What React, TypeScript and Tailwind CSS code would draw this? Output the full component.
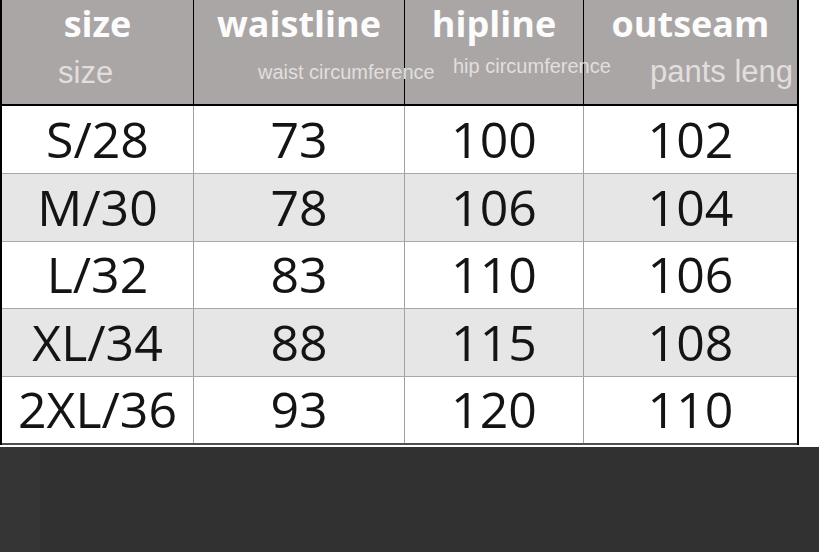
const headers = [
  { title: "size", sub: "size", subClass: "pl-[56px] pt-[13px] text-[31px] leading-[31px]" },
  { title: "waistline", sub: "waist circumference", subClass: "pl-[64px] pt-[18px] text-[20px] leading-[20px]" },
  { title: "hipline", sub: "hip circumference", subClass: "pl-[48px] pt-[12px] text-[20px] leading-[20px]" },
  { title: "outseam", sub: "pants leng", subClass: "pl-[66px] pt-[12px] text-[31px] leading-[31px]" },
];

const rows = [
  ["S/28", "73", "100", "102"],
  ["M/30", "78", "106", "104"],
  ["L/32", "83", "110", "106"],
  ["XL/34", "88", "115", "108"],
  ["2XL/36", "93", "120", "110"],
];

const rowHeights = ["h-[68px]", "h-[68px]", "h-[67px]", "h-[68px]", "h-[68px]"];

export default function App() {
  return (
    <div className="flex h-[552px] w-[819px] flex-col overflow-hidden bg-white">
      <div className="w-[799px] overflow-hidden border-x-2 border-black">
        {/* header */}
        <div className="grid h-[106px] grid-cols-[192px_211px_179px_213px] border-b-2 border-black bg-[#aaa6a6]">
          {headers.map((h, i) => (
            <div key={h.title} className={i < 3 ? "border-r border-black" : ""}>
              <div
                className="h-[44px] text-center text-[36px] font-bold leading-[48px] text-[#fcfcfc]"
                style={{ fontFamily: '"Open Sans", sans-serif' }}
              >
                {h.title}
              </div>
              <div
                className={`whitespace-nowrap text-[#e2dede] ${h.subClass}`}
                style={{ fontFamily: '"Liberation Sans", Arial, sans-serif' }}
              >
                {h.sub}
              </div>
            </div>
          ))}
        </div>

        {/* body */}
        {rows.map((row, r) => (
          <div
            key={row[0]}
            className={`grid grid-cols-[192px_211px_179px_213px] ${rowHeights[r]} ${
              r === rows.length - 1 ? "border-b-2 border-[#505050]" : "border-b border-[#a8a8a8]"
            } ${r % 2 === 1 ? "bg-[#e6e6e6]" : "bg-white"}`}
          >
            {row.map((cell, c) => (
              <div
                key={c}
                className={`flex items-center justify-center pb-[2px] text-[50px] leading-none text-[#141414] ${
                  c < 3 ? "border-r border-[#a0a0a0]" : ""
                }`}
                style={{ fontFamily: '"Open Sans", sans-serif' }}
              >
                {cell}
              </div>
            ))}
          </div>
        ))}
      </div>

      <div className="h-[2px]" />

      <div className="flex flex-1">
        <div className="w-[40px] bg-[#353535]" />
        <div className="flex-1 bg-[#313131]" />
      </div>
    </div>
  );
}
